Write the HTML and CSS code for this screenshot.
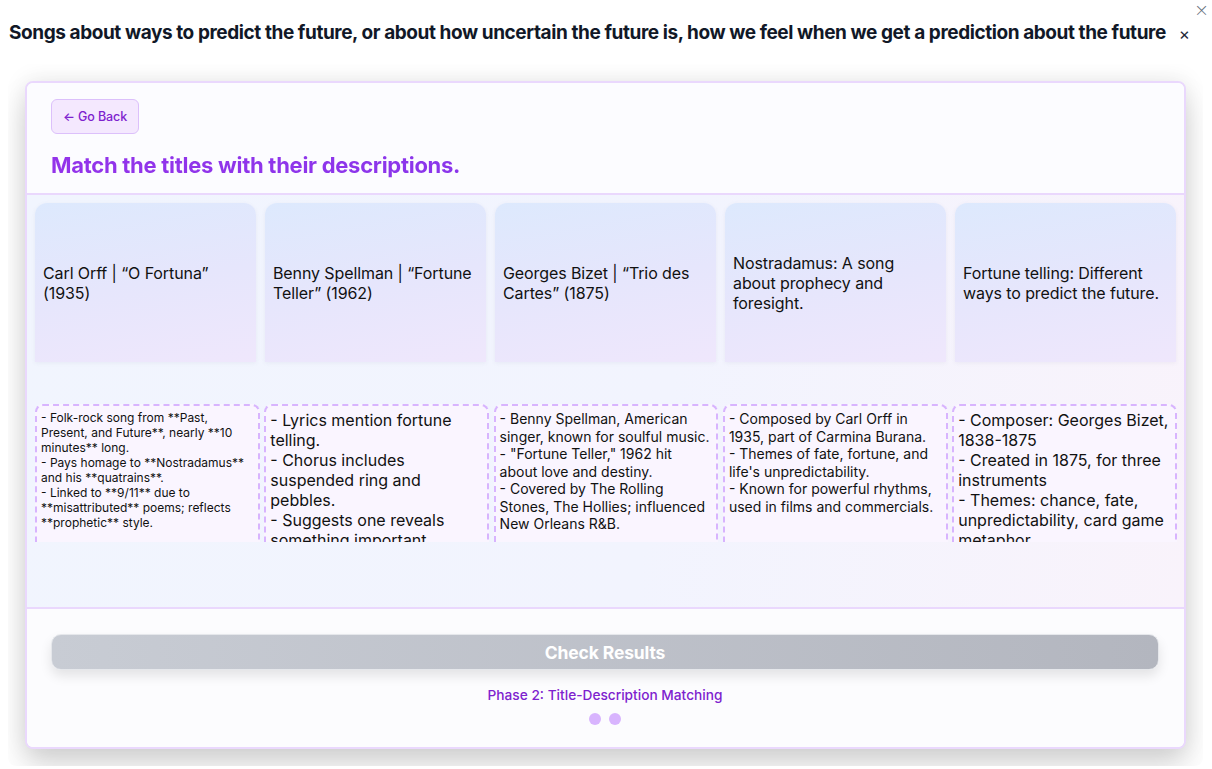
FILE: index.html
```html
<!DOCTYPE html>
<html lang="en">
<head>
<meta charset="utf-8">
<title>Matching</title>
<link rel="stylesheet" href="styles.css">
</head>
<body>
<button class="corner-close" aria-label="Close">×</button>
<header class="top">
  <h1 class="top-title">Songs about ways to predict the future, or about how uncertain the future is, how we feel when we get a prediction about the future</h1>
  <span class="top-x">×</span>
</header>
<div class="frame">
  <section class="card">
    <div class="card-head">
      <button class="back">← Go Back</button>
      <h2 class="heading">Match the titles with their descriptions.</h2>
    </div>
    <div class="board">
      <div class="titles">
        <div class="tcard">Carl Orff | “O Fortuna” (1935)</div>
        <div class="tcard">Benny Spellman | “Fortune Teller” (1962)</div>
        <div class="tcard">Georges Bizet | “Trio des Cartes” (1875)</div>
        <div class="tcard">Nostradamus: A song about prophecy and foresight.</div>
        <div class="tcard">Fortune telling: Different ways to predict the future.</div>
      </div>
      <div class="descs">
        <div class="dcard s12">- Folk-rock song from **Past, Present, and Future**, nearly **10 minutes** long.<br>- Pays homage to **Nostradamus** and his **quatrains**.<br>- Linked to **9/11** due to **misattributed** poems; reflects **prophetic** style.</div>
        <div class="dcard s16">- Lyrics mention fortune telling.<br>- Chorus includes suspended ring and pebbles.<br>- Suggests one reveals something important.</div>
        <div class="dcard s14">- Benny Spellman, American singer, known for soulful music.<br>- "Fortune Teller," 1962 hit about love and destiny.<br>- Covered by The Rolling Stones, The Hollies; influenced New Orleans R&amp;B.</div>
        <div class="dcard s14">- Composed by Carl Orff in 1935, part of Carmina Burana.<br>- Themes of fate, fortune, and life's unpredictability.<br>- Known for powerful rhythms, used in films and commercials.</div>
        <div class="dcard s16">- Composer: Georges Bizet, 1838-1875<br>- Created in 1875, for three instruments<br>- Themes: chance, fate, unpredictability, card game metaphor</div>
      </div>
    </div>
    <div class="card-foot">
      <button class="check">Check Results</button>
      <p class="phase">Phase 2: Title-Description Matching</p>
      <div class="dots"><span class="dot"></span><span class="dot"></span></div>
    </div>
  </section>
</div>
</body>
</html>
```
FILE: styles.css
```css
* { box-sizing: border-box; }
html, body { margin: 0; padding: 0; background: #ffffff; }
body {
  font-family: Inter, "Noto Sans", "Liberation Sans", sans-serif;
  color: #0f172a;
  width: 1212px;
  height: 769px;
  overflow: hidden;
  position: relative;
}
.corner-close {
  position: absolute;
  top: 1px;
  right: 3px;
  border: 0;
  background: none;
  color: #6b7280;
  font-size: 18px;
  line-height: 18px;
  padding: 0;
  font-family: "DejaVu Sans", sans-serif;
  font-weight: 300;
}
.top {
  display: flex;
  align-items: center;
  height: 64px;
  padding: 1px 22px 0 9px;
  gap: 12px;
}
.top-title {
  margin: 0;
  font-size: 19px;
  font-weight: 700;
  letter-spacing: -0.42px;
  color: #111827;
  white-space: nowrap;
  line-height: 24px;
}
.top-x {
  margin-left: auto;
  font-size: 17px;
  color: #1f2937;
  line-height: 1;
  padding-top: 3px;
}
.frame {
  margin: 0 9px 0 8px;
  height: 702px;
  padding: 17px;
  overflow: hidden;
  border-radius: 8px;
}
.card {
  border: 2px solid #ead8fd;
  border-radius: 8px;
  background: #fcfcff;
  box-shadow: 0 0 24px rgba(0,0,0,0.09), 0 18px 30px rgba(0,0,0,0.15);
  overflow: hidden;
}
.card-head {
  padding: 16px 24px 14px 24px;
  border-bottom: 2px solid #ead8fd;
  background: #fcfcff;
}
.back {
  display: block;
  height: 35px;
  padding: 0 11px;
  border: 1px solid #dcc0fb;
  border-radius: 6px;
  background: #f4e8fe;
  color: #7e22ce;
  font-family: Inter, sans-serif;
  font-size: 12.5px;
  font-weight: 500;
  letter-spacing: -0.1px;
}
.heading {
  margin: 17px 0 0 0;
  font-size: 22px;
  line-height: 28px;
  font-weight: 700;
  letter-spacing: -0.28px;
  background: linear-gradient(90deg, #9333ea, #7c3aed);
  -webkit-background-clip: text;
  background-clip: text;
  color: transparent;
}
.board {
  height: 414px;
  padding: 8px 7px 0 8px;
  border-bottom: 2px solid #ead8fd;
  background: linear-gradient(100deg, #f1f5fe 0%, #f2f4fe 55%, #f9f3fb 100%);
}
.titles {
  display: grid;
  grid-template-columns: repeat(5, 1fr);
  column-gap: 9px;
  height: 159px;
  margin-right: 1px;
}
.tcard {
  display: flex;
  align-items: center;
  padding: 0 8px;
  border-radius: 12px 12px 0 0;
  background: linear-gradient(170deg, #dde9fd 0%, #e6e6fc 50%, #efe7fc 100%);
  box-shadow: 0 1px 4px rgba(100,100,140,0.08);
  font-size: 16px;
  line-height: 20px;
  color: #111111;
  letter-spacing: -0.1px;
}
.descs {
  display: grid;
  grid-template-columns: repeat(5, 1fr);
  column-gap: 4.5px;
  margin-top: 42px;
  height: 138px;
}
.dcard {
  height: 138px;
  overflow: hidden;
  padding: 4px 4px 0 4px;
  border: 2px dashed #d8b4fe;
  border-bottom: 0;
  border-radius: 8px 8px 0 0;
  background: #faf5ff;
  color: #111111;
}
.s12 { font-size: 12px; line-height: 15px; }
.s14 { font-size: 14px; line-height: 17.5px; }
.s16 { font-size: 16px; line-height: 20px; }
.card-foot {
  padding: 25px 25px 22px 24px;
  background: #fcfcfe;
  display: flex;
  flex-direction: column;
  align-items: center;
}
.check {
  width: 100%;
  height: 36px;
  border: 1px solid #e5e7eb;
  border-radius: 10px;
  background: linear-gradient(90deg, #c8ccd4, #b3b6bf);
  color: #ffffff;
  font-family: Inter, sans-serif;
  font-size: 17.5px;
  font-weight: 700;
  letter-spacing: -0.15px;
  box-shadow: 0 6px 12px rgba(0,0,0,0.10);
}
.phase {
  margin: 16px 0 0 0;
  font-size: 13.7px;
  line-height: 18px;
  color: #7e22ce;
  font-weight: 500;
}
.dots {
  display: flex;
  gap: 8px;
  margin-top: 9px;
}
.dot {
  width: 12px;
  height: 12px;
  border-radius: 50%;
  background: #d8b4fe;
}
```
